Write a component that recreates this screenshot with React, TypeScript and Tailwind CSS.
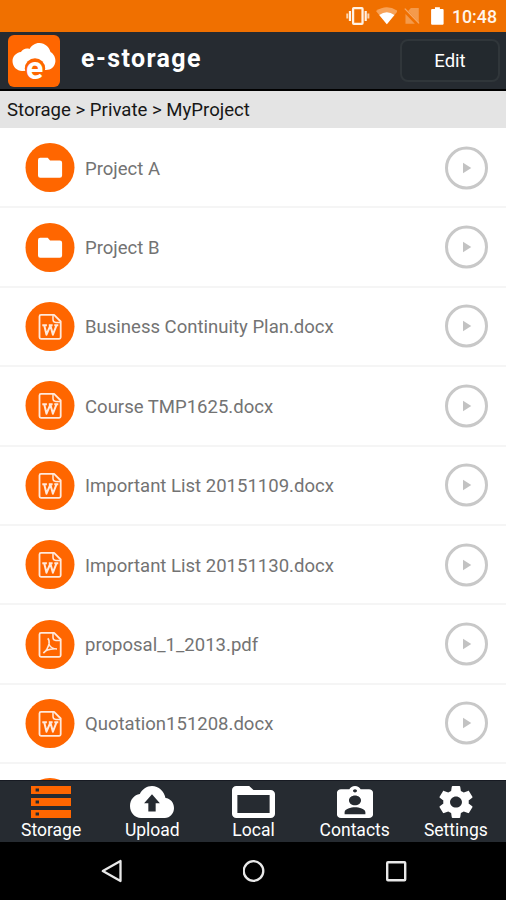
import type { ReactNode } from "react";

type Kind = "folder" | "word" | "pdf";

const files: { name: string; kind: Kind }[] = [
  { name: "Project A", kind: "folder" },
  { name: "Project B", kind: "folder" },
  { name: "Business Continuity Plan.docx", kind: "word" },
  { name: "Course TMP1625.docx", kind: "word" },
  { name: "Important List 20151109.docx", kind: "word" },
  { name: "Important List 20151130.docx", kind: "word" },
  { name: "proposal_1_2013.pdf", kind: "pdf" },
  { name: "Quotation151208.docx", kind: "word" },
  { name: "", kind: "word" },
];

function FileGlyph({ kind }: { kind: Kind }) {
  return (
    <svg viewBox="-0.5 0 50 49" className="h-[49px] w-[50px] shrink-0">
      <circle cx="24.5" cy="24.5" r="24.5" fill="#ff6600" />
      {kind === "folder" ? (
        <path
          d="M14.8 14.7h7.4l2.4 2.7h9.7a2.3 2.3 0 0 1 2.3 2.3v12.7a2.3 2.3 0 0 1-2.3 2.3H14.8a2.3 2.3 0 0 1-2.3-2.3V17a2.3 2.3 0 0 1 2.3-2.3z"
          fill="#fff"
        />
      ) : (
        <g fill="none" stroke="#ffe9dc" strokeWidth="1.8" strokeLinejoin="round">
          <path d="M15.500 12.900h13.100l6.600 6.600v15.800a1.500 1.500 0 0 1-1.500 1.500H15.500a1.500 1.500 0 0 1-1.500-1.500V14.400a1.500 1.500 0 0 1 1.500-1.500z" />
          <path d="M27.500 13v4.600q0 2.800 2.800 2.800h4.600" strokeWidth="1.5" />
          {kind === "word" ? (
            <path
              d="M16.800 23.300h4.600M23.300 23.300h3.800M28.800 23.300h4M18.800 23.400l2.200 9.300 3.900-9.300 2.500 9.300 3.600-9.300"
              strokeWidth="2"
            />
          ) : (
            <path
              d="M22.2 18.3q1.9 1.5 1.3 5.6-1.4 5.8-5.6 9.3M23.6 24.5q2 4.2 7.9 4.5M17.9 33.2q2-3.8 11.5-4.5"
              strokeWidth="1.6"
            />
          )}
        </g>
      )}
    </svg>
  );
}

function PlayRing() {
  return (
    <svg viewBox="-0.5 0 45 44" className="h-11 w-[45px] shrink-0">
      <circle cx="22" cy="22" r="20" fill="none" stroke="#c8c8c8" strokeWidth="3" />
      <path d="M18.500 16.700v10.600l8.300-5.300z" fill="#c2c2c2" />
    </svg>
  );
}

function Tab({ label, children }: { label: string; children: ReactNode }) {
  return (
    <div className="flex flex-1 flex-col items-center pt-[5px] pl-px">
      <div className="flex h-8 items-center justify-center">{children}</div>
      <span className="mt-px text-[17.5px] leading-[22px] whitespace-nowrap text-white">{label}</span>
    </div>
  );
}

export default function App() {
  return (
    <div className="flex h-[900px] w-[506px] flex-col overflow-hidden bg-white font-['Roboto',sans-serif]">
      <div className="flex h-8 shrink-0 items-center bg-[#f07000] pr-[9px] pl-[346px]">
        <svg viewBox="0 0 24 18" className="h-[18px] w-6">
          <rect x="7.2" y="1" width="9.6" height="16" rx="1" fill="none" stroke="#fff2e5" strokeWidth="2.3" />
          <path d="M4 4v10M20 4v10" stroke="#fff2e5" strokeWidth="2.2" />
          <path d="M1.300 6.500v5M22.700 6.500v5" stroke="#fbd3ac" strokeWidth="2" />
        </svg>
        <svg viewBox="0 0 22 18" className="ml-1.5 h-[18px] w-[22px]">
          <path d="M0 4Q11-3.6 22 4L11 17.5z" fill="#f7a258" />
          <path d="M3.300 8Q11 2.400 18.700 8L11 17.500z" fill="#fff" />
        </svg>
        <svg viewBox="0 0 16 18" className="ml-[7px] h-[18px] w-4">
          <path d="M7 1h8v14.500L4.200 4zM1.500 7L11 16.800H1.500z" fill="#f49a4b" />
          <path d="M.8 1.500l14.500 15" stroke="#f7aa68" strokeWidth="1.3" />
        </svg>
        <svg viewBox="0 0 13 18" className="ml-[11px] h-[18px] w-[13px]">
          <path d="M4 0h5v2h3.200l.6.7v14.500l-.7.8H.8l-.7-.8V2.700L.8 2H4z" fill="#fff" />
        </svg>
        <span className="ml-2 pt-px text-[17.800px] leading-6 font-medium text-[#fff5eb]">10:48</span>
      </div>

      <header className="flex h-[59px] shrink-0 items-center border-b-2 border-black bg-[#262b31] pr-1.5 pl-2">
        <svg viewBox="0 0 52 52" className="mt-px h-[52px] w-[52px]">
          <rect width="52" height="52" rx="6" fill="#ff6600" />
          <path
            d="M14 36c-5 0-9.500-4.200-9.500-10 0-4.500 3.600-8.500 8.500-9 1.700-2.800 5-4.100 8.500-3 2.200-3.700 6-6.200 10-6 5.500.2 9.800 4.200 11 9 3.400 2 5.200 5.800 4.900 9.500-.4 5-4.400 8.500-9.400 8.500z"
            fill="#fff"
          />
          <circle cx="27" cy="33.500" r="10.200" fill="#ff6600" />
          <text x="26.700" y="43.500" textAnchor="middle" fontSize="32" fontWeight="700" fontFamily="Roboto, sans-serif" fill="#fff">
            e
          </text>
        </svg>
        <h1 className="mb-1 ml-[21px] text-[25px] leading-8 font-bold tracking-[1.400px] text-white">e-storage</h1>
        <button className="ml-auto flex h-[43px] w-[100px] items-center justify-center rounded-lg border-2 border-[#30363a] bg-[#23292e] pt-[3px] text-[18.500px] text-white">
          Edit
        </button>
      </header>

      <div className="flex h-[37px] shrink-0 items-center bg-[#e4e4e4] pt-[3px] pl-[7px] text-[18.600px] text-[#171717]">
        Storage &gt; Private &gt; MyProject
      </div>

      <main className="min-h-0 flex-1 overflow-hidden pt-px">
        {files.map((file, index) => (
          <div
            key={index}
            className="flex h-[79.400px] items-center border-b-2 border-[#f5f5f5] pr-[17px] pl-[25px] text-[#737373]"
          >
            <FileGlyph kind={file.kind} />
            <span className="ml-[10px] flex-1 pt-[2px] text-[18.550px] leading-6">{file.name}</span>
            <PlayRing />
          </div>
        ))}
      </main>

      <nav className="flex h-[62px] shrink-0 border-t border-[#171a22] bg-[#262b31]">
        <Tab label="Storage">
          <svg viewBox="2 4 20 16" preserveAspectRatio="none" className="h-8 w-10">
            <path
              fill="#ff6600"
              d="M2 20h20v-4H2zM4.300 17.300h1.700v1.500H4.300zM2 4v4h20V4zm4 2.800H4.300V5.300H6zM2 14h20v-4H2zm2.300-2.700H6v1.500H4.300z"
              fillRule="evenodd"
            />
          </svg>
        </Tab>
        <Tab label="Upload">
          <svg viewBox="0 4 24 16" preserveAspectRatio="none" className="h-8 w-11">
            <path
              fill="#fff"
              d="M19.350 10.040C18.670 6.590 15.640 4 12 4 9.110 4 6.600 5.640 5.350 8.040 2.340 8.360 0 10.910 0 14c0 3.310 2.690 6 6 6h13c2.760 0 5-2.240 5-5 0-2.640-2.050-4.780-4.650-4.960zM14 12.600v4.100h-4v-4.100H7.700L12 8.100l4.300 4.500z"
            />
          </svg>
        </Tab>
        <Tab label="Local">
          <svg viewBox="2 4 20 16" preserveAspectRatio="none" className="h-8 w-[43px]">
            <path
              fill="#fff"
              fillRule="evenodd"
              d="M20 6h-8l-2-2H4c-1.100 0-2 .9-2 2v12c0 1.100.9 2 2 2h16c1.100 0 2-.9 2-2V8c0-1.100-.9-2-2-2zM19.500 17.500h-15v-9h15z"
            />
          </svg>
        </Tab>
        <Tab label="Contacts">
          <svg viewBox="3 1 18 20" preserveAspectRatio="none" className="h-8 w-9">
            <path
              fill="#fff"
              d="M19 3h-4.180C14.400 1.840 13.300 1 12 1c-1.300 0-2.400.84-2.820 2H5c-1.100 0-2 .9-2 2v14c0 1.100.9 2 2 2h14c1.100 0 2-.9 2-2V5c0-1.100-.9-2-2-2zm-7 0c.55 0 1 .45 1 1s-.45 1-1 1-1-.45-1-1 .45-1 1-1zm0 4c1.660 0 3 1.340 3 3s-1.340 3-3 3-3-1.340-3-3 1.340-3 3-3zm5.200 11.600H6.800v-1.200c0-2 3.200-3.100 5.200-3.100s5.200 1.100 5.200 3.100z"
            />
          </svg>
        </Tab>
        <Tab label="Settings">
          <svg viewBox="2 2 20 20" preserveAspectRatio="none" className="h-8 w-[34px]">
            <path
              fill="#fff"
              d="M19.430 12.980c.04-.32.07-.64.07-.98s-.03-.66-.07-.98l2.110-1.650c.19-.15.24-.42.12-.64l-2-3.460c-.12-.22-.39-.3-.61-.22l-2.490 1c-.52-.4-1.080-.73-1.690-.98l-.38-2.650C14.460 2.180 14.250 2 14 2h-4c-.25 0-.46.18-.49.42l-.38 2.650c-.61.25-1.170.59-1.690.98l-2.490-1c-.23-.09-.49 0-.61.22l-2 3.460c-.13.22-.07.49.12.64l2.110 1.650c-.04.32-.07.65-.07.98s.03.66.07.98l-2.110 1.650c-.19.15-.24.42-.12.64l2 3.460c.12.22.39.3.61.22l2.490-1c.52.4 1.080.73 1.690.98l.38 2.650c.03.24.24.42.49.42h4c.25 0 .46-.18.49-.42l.38-2.650c.61-.25 1.170-.59 1.690-.98l2.490 1c.23.09.49 0 .61-.22l2-3.460c.12-.22.07-.49-.12-.64l-2.110-1.650zM12 15.500c-1.930 0-3.500-1.570-3.500-3.500s1.570-3.500 3.500-3.500 3.500 1.570 3.500 3.500-1.570 3.500-3.500 3.500z"
            />
          </svg>
        </Tab>
      </nav>

      <div className="flex h-[58px] shrink-0 items-center bg-black pl-[101px]">
        <svg viewBox="0 0 22 24" className="h-6 w-[22px]">
          <path d="M19.500 2v20L1.800 12z" fill="none" stroke="#e8e8e8" strokeWidth="2.300" strokeLinejoin="round" />
        </svg>
        <svg viewBox="0 0 22 22" className="ml-[120px] h-[22px] w-[22px]">
          <circle cx="10.500" cy="11" r="9.800" fill="none" stroke="#e8e8e8" strokeWidth="2.300" />
        </svg>
        <svg viewBox="0 0 21 21" className="ml-[121px] h-[21px] w-[21px]">
          <rect x="1.200" y="1.200" width="18" height="18" rx=".8" fill="none" stroke="#e8e8e8" strokeWidth="2.400" />
        </svg>
      </div>
    </div>
  );
}
